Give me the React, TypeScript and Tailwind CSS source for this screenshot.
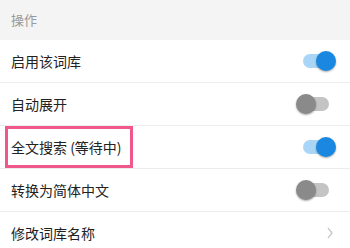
import React from 'react';

const font = { fontFamily: '"Noto Sans CJK SC", "Noto Sans", sans-serif' };

const Toggle = ({ on }: { on: boolean }) => (
    <div className="relative w-[40px] h-[20px] flex items-center">
        <div className={`ml-[7px] w-[26px] h-[14px] rounded-full ${on ? 'bg-[#a9d6f7]' : 'bg-[#c4c4c4]'}`} />
        <div
            className={`absolute top-0 w-[20px] h-[20px] rounded-full shadow-[0_1px_2px_rgba(0,0,0,0.35)] ${on ? 'right-0 bg-[#1a88e0]' : 'left-0 bg-[#8a8a8a]'}`}
        />
    </div>
);

const Row = ({ label, right, highlight }: { label: string; right: React.ReactNode; highlight?: boolean }) => (
    <div className="h-[43px] flex items-center justify-between border-b border-[#ececec] bg-white pl-[5px] pr-[14px]">
        <div
            className={`h-[42px] flex items-center pl-[3px] pr-[8px] text-[14px] text-[#222] ${highlight ? 'border-[3px] border-[#f0588c]' : 'border-[3px] border-transparent'}`}
        >
            {label}
        </div>
        {right}
    </div>
);

export default function App() {
    return (
        <div className="w-[350px] h-[248px] overflow-hidden bg-white" style={font}>
            <div className="h-[40px] bg-[#f4f4f4] flex items-center pl-[11px] text-[13px] text-[#999]">操作</div>
            <Row label="启用该词库" right={<Toggle on />} />
            <Row label="自动展开" right={<Toggle on={false} />} />
            <Row label="全文搜索 (等待中)" right={<Toggle on />} highlight />
            <Row label="转换为简体中文" right={<Toggle on={false} />} />
            <Row
                label="修改词库名称"
                right={
                    <svg width="8" height="12" viewBox="0 0 8 12" className="mr-[2px]">
                        <path d="M2 1 L6 6 L2 11" fill="none" stroke="#c8c8c8" strokeWidth="1.3" />
                    </svg>
                }
            />
        </div>
    );
}
